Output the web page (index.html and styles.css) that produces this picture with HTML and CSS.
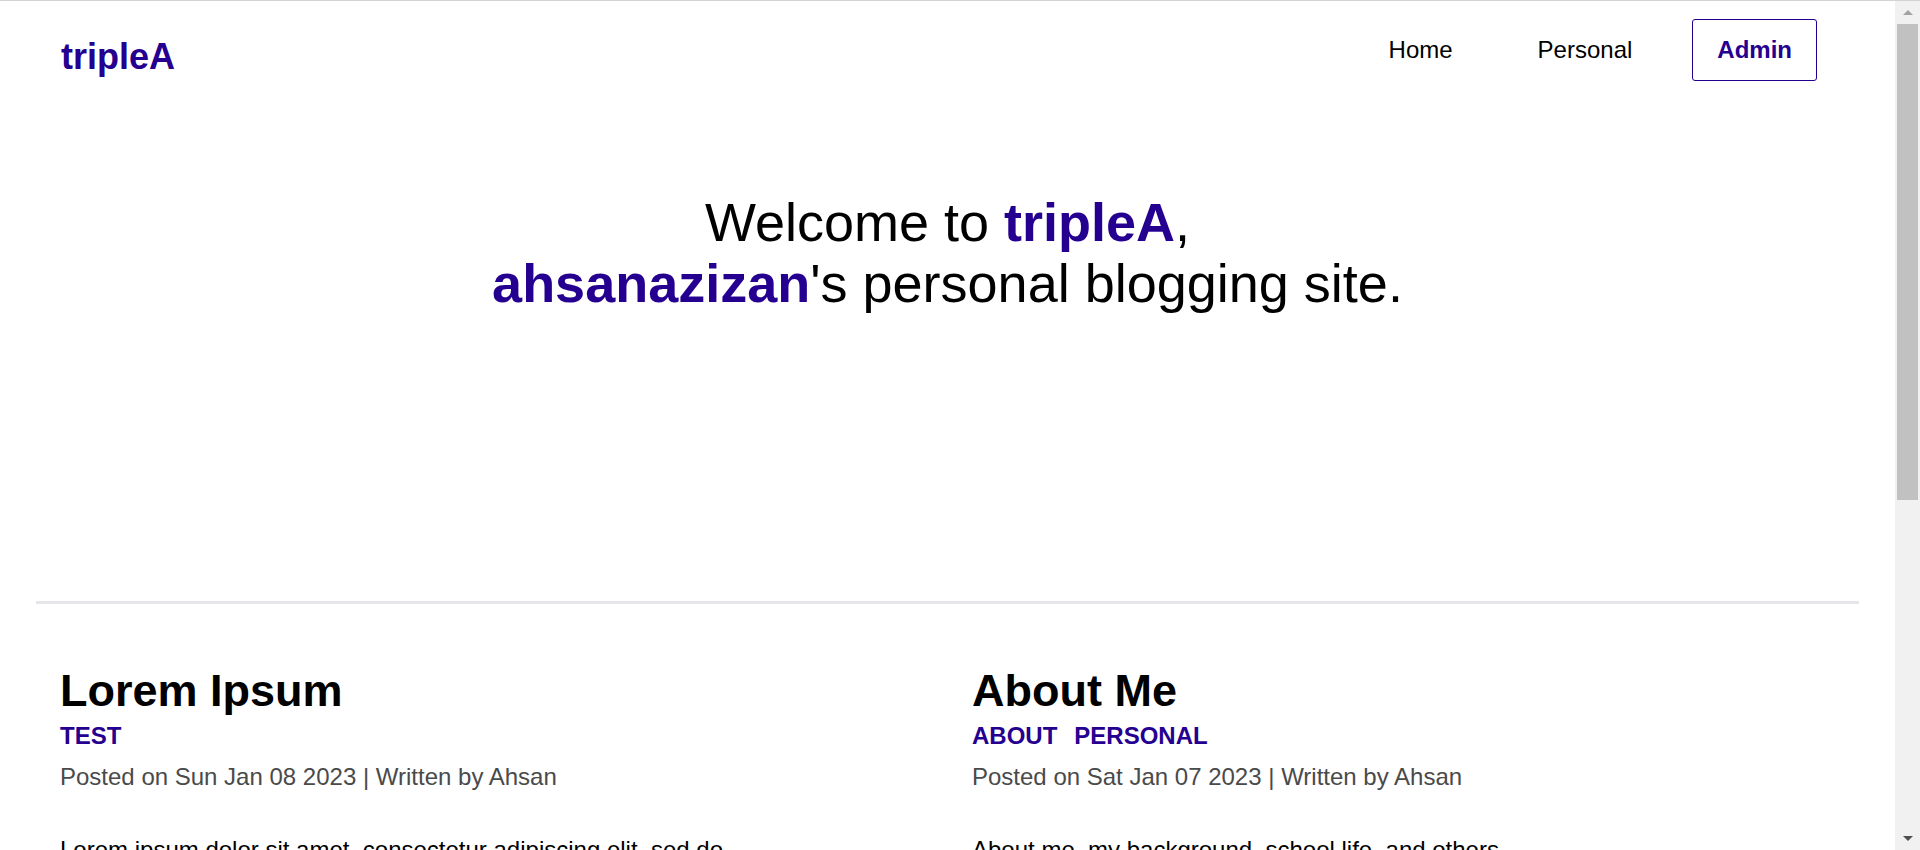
FILE: index.html
```html
<!DOCTYPE html>
<html lang="en">
<head>
<meta charset="utf-8">
<title>tripleA</title>
<link rel="stylesheet" href="styles.css">
</head>
<body>
<div class="window">
  <div class="viewport">
    <header class="site-header">
      <a class="logo" href="#">tripleA</a>
      <nav class="nav">
        <a class="nav-link" href="#">Home</a>
        <a class="nav-link" href="#">Personal</a>
        <a class="nav-link nav-admin" href="#">Admin</a>
      </nav>
    </header>

    <section class="hero">
      <h1 class="hero-title">Welcome to <span class="accent">tripleA</span>,<br><span class="accent">ahsanazizan</span>'s personal blogging site.</h1>
    </section>

    <hr class="divider">

    <main class="posts">
      <article class="post">
        <h2 class="post-title">Lorem Ipsum</h2>
        <div class="post-tags"><span class="tag">Test</span></div>
        <p class="post-meta">Posted on Sun Jan 08 2023 | Written by Ahsan</p>
        <p class="post-excerpt">Lorem ipsum dolor sit amet, consectetur adipiscing elit, sed do eiusmod tempor incididunt ut labore et dolore magna aliqua.</p>
      </article>
      <article class="post">
        <h2 class="post-title">About Me</h2>
        <div class="post-tags"><span class="tag">About</span><span class="tag">Personal</span></div>
        <p class="post-meta">Posted on Sat Jan 07 2023 | Written by Ahsan</p>
        <p class="post-excerpt">About me, my background, school life, and others.</p>
      </article>
    </main>
  </div>

  <div class="scrollbar">
    <div class="sb-button"><span class="sb-arrow-up"></span></div>
    <div class="sb-track"><div class="sb-thumb"></div></div>
    <div class="sb-button"><span class="sb-arrow-down"></span></div>
  </div>
</div>
</body>
</html>
```

FILE: styles.css
```css
html, body {
  margin: 0;
  padding: 0;
  overflow: hidden;
  background: #ffffff;
}

body {
  font-family: "Liberation Sans", Arial, sans-serif;
  color: #000000;
}

.window {
  display: flex;
  height: 850px;
  box-sizing: border-box;
  border-top: 1px solid #d2d2d2;
  overflow: hidden;
}

.viewport {
  flex: 1;
  min-width: 0;
  overflow: hidden;
}

/* Header */
.site-header {
  display: flex;
  justify-content: space-between;
  align-items: flex-start;
  padding: 18px 78px 0 61px;
}

.logo {
  margin-top: 17.5px;
  font-size: 36px;
  line-height: 40px;
  font-weight: 700;
  color: #250090;
  text-decoration: none;
}

.nav {
  display: flex;
  align-items: center;
  gap: 35px;
}

.nav-link {
  padding: 16px 24px;
  border: 1px solid transparent;
  border-radius: 3px;
  font-size: 24px;
  line-height: 28px;
  color: #000000;
  text-decoration: none;
}

.nav-admin {
  border-color: #250090;
  color: #250090;
  font-weight: 700;
}

/* Hero */
.hero {
  padding: 111px 0 287px;
  text-align: center;
}

.hero-title {
  margin: 0;
  font-size: 54px;
  line-height: 61px;
  font-weight: 400;
}

.accent {
  color: #250090;
  font-weight: 700;
}

/* Divider */
.divider {
  height: 3px;
  margin: 0 36px;
  border: 0;
  background: #e5e5ea;
}

/* Posts */
.posts {
  display: grid;
  grid-template-columns: 1fr 1fr;
  column-gap: 49px;
  padding: 61px 60px 0;
}

.post-title {
  margin: 0 0 5px;
  font-size: 45px;
  line-height: 52px;
  font-weight: 700;
}

.post-tags {
  display: flex;
  gap: 17px;
  margin-bottom: 13px;
}

.tag {
  font-size: 24px;
  line-height: 28px;
  font-weight: 700;
  text-transform: uppercase;
  color: #250090;
}

.post-meta {
  margin: 0 0 45px;
  font-size: 24px;
  line-height: 28px;
  color: #4a4a4a;
}

.post-excerpt {
  max-width: 80%;
  margin: 0;
  font-size: 24px;
  line-height: 28px;
}

/* Scrollbar */
.scrollbar {
  flex: none;
  width: 25px;
  display: flex;
  flex-direction: column;
  background: #f1f1f1;
}

.sb-button {
  height: 23px;
  display: flex;
  align-items: center;
  justify-content: center;
}

.sb-arrow-up {
  width: 0;
  height: 0;
  border-left: 5px solid transparent;
  border-right: 5px solid transparent;
  border-bottom: 5px solid #a3a3a3;
}

.sb-arrow-down {
  width: 0;
  height: 0;
  border-left: 5px solid transparent;
  border-right: 5px solid transparent;
  border-top: 5px solid #505050;
}

.sb-track {
  flex: 1;
  padding: 0 2px;
}

.sb-thumb {
  height: 476px;
  background: #c1c1c1;
}
```
